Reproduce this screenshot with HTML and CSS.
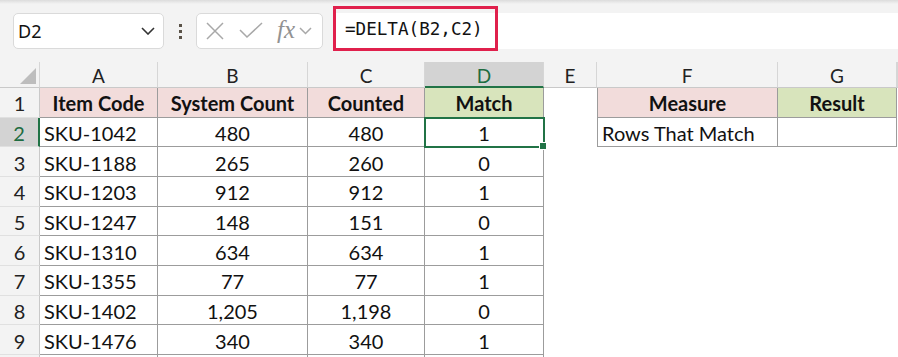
FILE: index.html
```html
<!DOCTYPE html>
<html lang="en">
<head>
  <meta charset="UTF-8">
  <title>DELTA</title>
  <link rel="stylesheet" href="styles.css">
</head>
<body>
  <div class="toolbar">
    <div class="name-box">
      <span>D2</span>
      <svg width="14" height="8" viewBox="0 0 14 8"><path d="M1 1l6 6 6-6" fill="none" stroke="#333" stroke-width="1.6"/></svg>
    </div>
    <div class="dots"><i></i><i></i><i></i></div>
    <div class="fx-box">
      <svg width="18" height="18" viewBox="0 0 18 18"><path d="M1 1l16 16M17 1L1 17" stroke="#a8a8a8" stroke-width="1.5"/></svg>
      <svg width="24" height="18" viewBox="0 0 24 18"><path d="M1 8l7 7L23 1" fill="none" stroke="#a8a8a8" stroke-width="1.5"/></svg>
      <span class="fx">fx</span>
      <svg width="13" height="8" viewBox="0 0 13 8"><path d="M1 1l5.5 5.5L12 1" fill="none" stroke="#a8a8a8" stroke-width="1.5"/></svg>
    </div>
    <div class="formula">
      <span class="formula-text">=DELTA(B2,C2)</span>
    </div>
  </div>

  <div class="sheet">
    <div class="ch corner"><svg width="16" height="16" viewBox="0 0 16 16"><path d="M16 0V16H0z" fill="#bdbdbd"/></svg></div>
    <div class="ch">A</div>
    <div class="ch">B</div>
    <div class="ch">C</div>
    <div class="ch active">D</div>
    <div class="ch">E</div>
    <div class="ch">F</div>
    <div class="ch">G</div>
    <div class="ch"></div>

    <div class="rh">1</div>
    <div class="t bold pink">Item Code</div>
    <div class="t bold pink">System Count</div>
    <div class="t bold pink">Counted</div>
    <div class="t bold green">Match</div>
    <div class="c"></div>
    <div class="t edge bold pink">Measure</div>
    <div class="t bold green">Result</div>
    <div class="c"></div>

    <div class="rh active">2</div>
    <div class="t left">SKU-1042</div>
    <div class="t">480</div>
    <div class="t">480</div>
    <div class="t sel">1</div>
    <div class="c"></div>
    <div class="t edge left">Rows That Match</div>
    <div class="t"></div>
    <div class="c"></div>

    <div class="rh">3</div>
    <div class="t left">SKU-1188</div>
    <div class="t">265</div>
    <div class="t">260</div>
    <div class="t">0</div>
    <div class="c wide"></div>

    <div class="rh">4</div>
    <div class="t left">SKU-1203</div>
    <div class="t">912</div>
    <div class="t">912</div>
    <div class="t">1</div>
    <div class="c wide"></div>

    <div class="rh">5</div>
    <div class="t left">SKU-1247</div>
    <div class="t">148</div>
    <div class="t">151</div>
    <div class="t">0</div>
    <div class="c wide"></div>

    <div class="rh">6</div>
    <div class="t left">SKU-1310</div>
    <div class="t">634</div>
    <div class="t">634</div>
    <div class="t">1</div>
    <div class="c wide"></div>

    <div class="rh">7</div>
    <div class="t left">SKU-1355</div>
    <div class="t">77</div>
    <div class="t">77</div>
    <div class="t">1</div>
    <div class="c wide"></div>

    <div class="rh">8</div>
    <div class="t left">SKU-1402</div>
    <div class="t">1,205</div>
    <div class="t">1,198</div>
    <div class="t">0</div>
    <div class="c wide"></div>

    <div class="rh">9</div>
    <div class="t left">SKU-1476</div>
    <div class="t">340</div>
    <div class="t">340</div>
    <div class="t">1</div>
    <div class="c wide"></div>

    <div class="rh"></div>
    <div class="t"></div>
    <div class="t"></div>
    <div class="t"></div>
    <div class="t"></div>
    <div class="c wide"></div>
  </div>
</body>
</html>
```

FILE: styles.css
```css
body {
  margin: 0;
  font-family: Lato, 'Noto Sans', sans-serif;
  background-color: #ffffff;
  overflow: hidden;
  height: 357px;
}
.toolbar {
  display: flex;
  align-items: flex-start;
  height: 62px;
  box-sizing: border-box;
  padding: 13px 0 0 13px;
  background: linear-gradient(#dcdcdc, #f3f3f3 4px);
  background-color: #f3f3f3;
}
.name-box {
  width: 151px;
  height: 36px;
  box-sizing: border-box;
  display: flex;
  align-items: center;
  justify-content: space-between;
  padding: 0 8px 0 4px;
  background-color: #ffffff;
  border: 1px solid #dadada;
  border-radius: 5px;
  font-family: 'Noto Sans', sans-serif;
  font-size: 18px;
  color: #111;
}
.dots {
  width: 32px;
  height: 36px;
  display: flex;
  flex-direction: column;
  align-items: center;
  justify-content: center;
  gap: 3px;
}
.dots i {
  width: 3px;
  height: 3px;
  background-color: #5a5248;
}
.fx-box {
  width: 127px;
  height: 36px;
  box-sizing: border-box;
  display: flex;
  align-items: center;
  padding: 0 6px 0 9px;
  background-color: #ffffff;
  border: 1px solid #dadada;
  border-radius: 5px;
}
.fx-box svg:nth-child(2) {
  margin-left: 15px;
}
.fx {
  margin-left: 14px;
  margin-right: 4px;
  font-family: 'Liberation Serif', serif;
  font-style: italic;
  font-size: 25px;
  color: #929292;
  line-height: 1;
  padding-bottom: 4px;
}
.formula {
  flex: 1;
  height: 36px;
  margin-left: 10px;
  display: flex;
  align-items: flex-start;
  background-color: #ffffff;
  box-sizing: border-box;
}
.formula-text {
  display: flex;
  align-items: center;
  height: 45px;
  box-sizing: border-box;
  margin-top: -7px;
  padding: 0 12px 0 9px;
  border: 3px solid #e0204c;
  font-family: 'DejaVu Sans Mono', monospace;
  font-size: 17.6px;
  color: #111;
}
.sheet {
  display: grid;
  grid-template-columns: 40px 118px 150px 117px 119px 53px 181px 119px 1fr;
  grid-template-rows: 26px repeat(10, 29.67px);
  font-size: 20px;
  color: #111;
}
.sheet > div {
  display: flex;
  align-items: center;
  justify-content: center;
  box-sizing: border-box;
  padding-top: 2px;
  white-space: nowrap;
}
.ch {
  background-color: #f3f3f3;
  border-right: 1px solid #d6d6d6;
  border-bottom: 1px solid #c9c9c9;
  color: #222;
  font-size: 19px;
}
.ch.corner {
  justify-content: flex-end;
  align-items: flex-end;
  padding: 0 3px 3px 0;
}
.ch.active {
  background-color: #d3d3d3;
  color: #1e6c41;
  border-bottom: 2px solid #217346;
}
.rh {
  background-color: #f3f3f3;
  border-right: 1px solid #c9c9c9;
  border-bottom: 1px solid #e0e0e0;
  color: #222;
}
.rh.active {
  background-color: #d3d3d3;
  color: #1e6c41;
  border-right: 2px solid #217346;
}
.t {
  border-right: 1px solid #9c9c9c;
  border-bottom: 1px solid #9c9c9c;
}
.t.edge {
  border-left: 1px solid #9c9c9c;
}
.t.left {
  justify-content: flex-start;
  padding-left: 4px;
}
.bold {
  font-weight: bold;
}
.pink {
  background-color: #f2dcdb;
}
.green {
  background-color: #d8e4bc;
}
.sel {
  position: relative;
  outline: 2px solid #217346;
  outline-offset: -1px;
}
.sel::after {
  content: '';
  position: absolute;
  right: -4px;
  bottom: -4px;
  width: 6px;
  height: 6px;
  background-color: #217346;
  border: 1px solid #ffffff;
}
.wide {
  grid-column: span 4;
}
```
